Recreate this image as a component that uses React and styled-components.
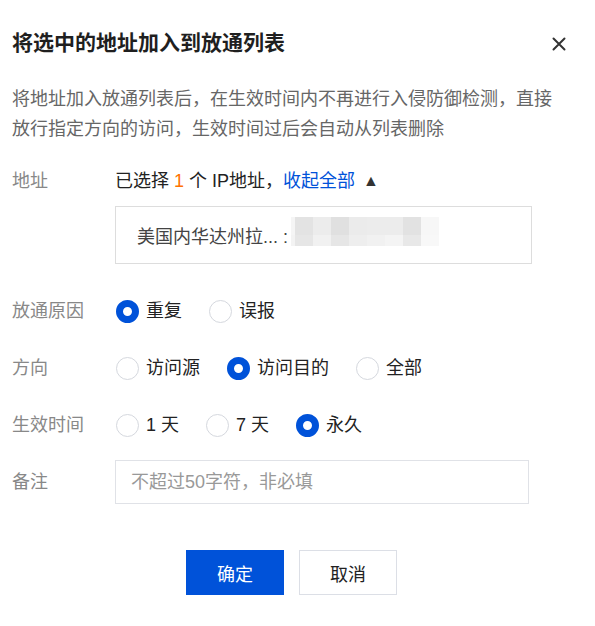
import React from 'react';
import styled, { createGlobalStyle } from 'styled-components';

const GlobalStyle = createGlobalStyle`
  body {
    margin: 0;
    background: #fff;
    font-family: "Liberation Sans", "Noto Sans CJK SC", sans-serif;
  }
  * { box-sizing: border-box; }
`;

const mosaicTop = ['#f5f5f5', '#e3e3e3', '#ececec', '#e0e0e0', '#ebebeb', '#ececec', '#ececec', '#e2e2e2', '#f7f7f7'];
const mosaicBottom = ['#f3f3f3', '#e6e6e6', '#f1f1f1', '#e6e6e6', '#eeeeee', '#f1f1f1', '#f4f4f4', '#e8e8e8', '#f8f8f8'];

function Mosaic() {
  const xs = [0, 4, 22, 40, 58, 76, 94, 112, 130];
  const ws = [4, 18, 18, 18, 18, 18, 18, 18, 18];
  return (
    <MosaicSvg width="148" height="29" viewBox="0 0 148 29">
      {xs.map((x, i) => (
        <rect key={'t' + i} x={x} y="0" width={ws[i]} height="18" fill={mosaicTop[i]} />
      ))}
      {xs.map((x, i) => (
        <rect key={'b' + i} x={x} y="18" width={ws[i]} height="11" fill={mosaicBottom[i]} />
      ))}
    </MosaicSvg>
  );
}

function Radio({ checked, children }) {
  return (
    <Option>
      <Circle $checked={checked} />
      <span>{children}</span>
    </Option>
  );
}

export default function App() {
  return (
    <>
      <GlobalStyle />
      <Dialog>
        <Header>
          <Title>将选中的地址加入到放通列表</Title>
          <Close aria-label="close">
            <svg width="14" height="14" viewBox="0 0 14 14">
              <path d="M1.5 1.5 L12.5 12.5 M12.5 1.5 L1.5 12.5" stroke="#333" strokeWidth="2" strokeLinecap="round" />
            </svg>
          </Close>
        </Header>

        <Desc>
          将地址加入放通列表后，在生效时间内不再进行入侵防御检测，直接放行指定方向的访问，生效时间过后会自动从列表删除
        </Desc>

        <AddressRow>
          <Label>地址</Label>
          <div>
            <Summary>
              已选择 <Count>1</Count> 个 IP地址，<Link>收起全部</Link> <Arrow>▲</Arrow>
            </Summary>
            <AddressBox>
              <span>美国内华达州拉... :</span>
              <Mosaic />
            </AddressBox>
          </div>
        </AddressRow>

        <RadioRow $top={30}>
          <Label>放通原因</Label>
          <Group>
            <Radio checked>重复</Radio>
            <Radio>误报</Radio>
          </Group>
        </RadioRow>

        <RadioRow $top={23}>
          <Label>方向</Label>
          <Group>
            <Radio>访问源</Radio>
            <Radio checked>访问目的</Radio>
            <Radio>全部</Radio>
          </Group>
        </RadioRow>

        <RadioRow $top={23}>
          <Label>生效时间</Label>
          <Group>
            <Radio>1 天</Radio>
            <Radio>7 天</Radio>
            <Radio checked>永久</Radio>
          </Group>
        </RadioRow>

        <NoteRow>
          <Label>备注</Label>
          <NoteInput placeholder="不超过50字符，非必填" />
        </NoteRow>

        <Footer>
          <Button $primary>确定</Button>
          <Button>取消</Button>
        </Footer>
      </Dialog>
    </>
  );
}

const Dialog = styled.div`
  width: 595px;
  padding: 31px 24px 30px 12px;
  color: #222;
`;

const Header = styled.div`
  display: flex;
  align-items: center;
  justify-content: space-between;
  height: 24px;
`;

const Title = styled.h2`
  margin: 0;
  font-size: 21px;
  line-height: 24px;
  font-weight: bold;
  color: #1f1f1f;
`;

const Close = styled.button`
  width: 24px;
  height: 24px;
  padding: 0;
  border: 0;
  background: none;
  display: flex;
  align-items: center;
  justify-content: center;
  margin-top: 2px;
`;

const Desc = styled.p`
  margin: 29px 0 0;
  max-width: 550px;
  font-size: 18px;
  line-height: 30px;
  color: #666;
`;

const Row = styled.div`
  display: grid;
  grid-template-columns: 103px 1fr;
  align-items: center;
`;

const AddressRow = styled(Row)`
  margin-top: 24px;
  align-items: start;
`;

const Label = styled.div`
  font-size: 18px;
  line-height: 26px;
  color: #888;
`;

const Summary = styled.div`
  font-size: 18px;
  line-height: 26px;
  color: #222;
`;

const Count = styled.span`
  color: #ff7200;
`;

const Link = styled.span`
  color: #0052d9;
`;

const Arrow = styled.span`
  font-size: 16px;
  color: #333;
  margin-left: 3px;
  vertical-align: 1px;
`;

const AddressBox = styled.div`
  margin-top: 12px;
  width: 417px;
  height: 58px;
  border: 1px solid #dddddd;
  display: flex;
  align-items: center;
  padding-left: 21px;
  font-size: 18px;
  color: #444;
`;

const MosaicSvg = styled.svg`
  display: block;
  margin-left: 3px;
  margin-bottom: 7px;
`;

const RadioRow = styled(Row)`
  margin-top: ${(p) => p.$top}px;
  height: 34px;
`;

const Group = styled.div`
  display: flex;
  align-items: center;
  gap: 27px;
  padding-left: 1px;
`;

const Option = styled.label`
  display: flex;
  align-items: center;
  gap: 7px;
  font-size: 18px;
  line-height: 26px;
  color: #222;
`;

const Circle = styled.span`
  width: 23px;
  height: 23px;
  border-radius: 50%;
  background: #fff;
  border: ${(p) => (p.$checked ? '7px solid #0052d9' : '1px solid #d5d8de')};
`;

const NoteRow = styled(Row)`
  margin-top: 18px;
`;

const NoteInput = styled.input`
  width: 414px;
  height: 44px;
  border: 1px solid #e0e2e7;
  padding: 0 0 0 15px;
  font-family: inherit;
  font-size: 18px;
  color: #222;
  outline: none;
  &::placeholder {
    color: #999;
  }
`;

const Footer = styled.div`
  margin-top: 46px;
  display: flex;
  justify-content: center;
  gap: 15px;
`;

const Button = styled.button`
  width: 98px;
  height: 45px;
  font-family: inherit;
  font-size: 18px;
  border: 1px solid ${(p) => (p.$primary ? '#0052d9' : '#dcdfe6')};
  background: ${(p) => (p.$primary ? '#0052d9' : '#fff')};
  color: ${(p) => (p.$primary ? '#fff' : '#222')};
  padding: 0;
`;
